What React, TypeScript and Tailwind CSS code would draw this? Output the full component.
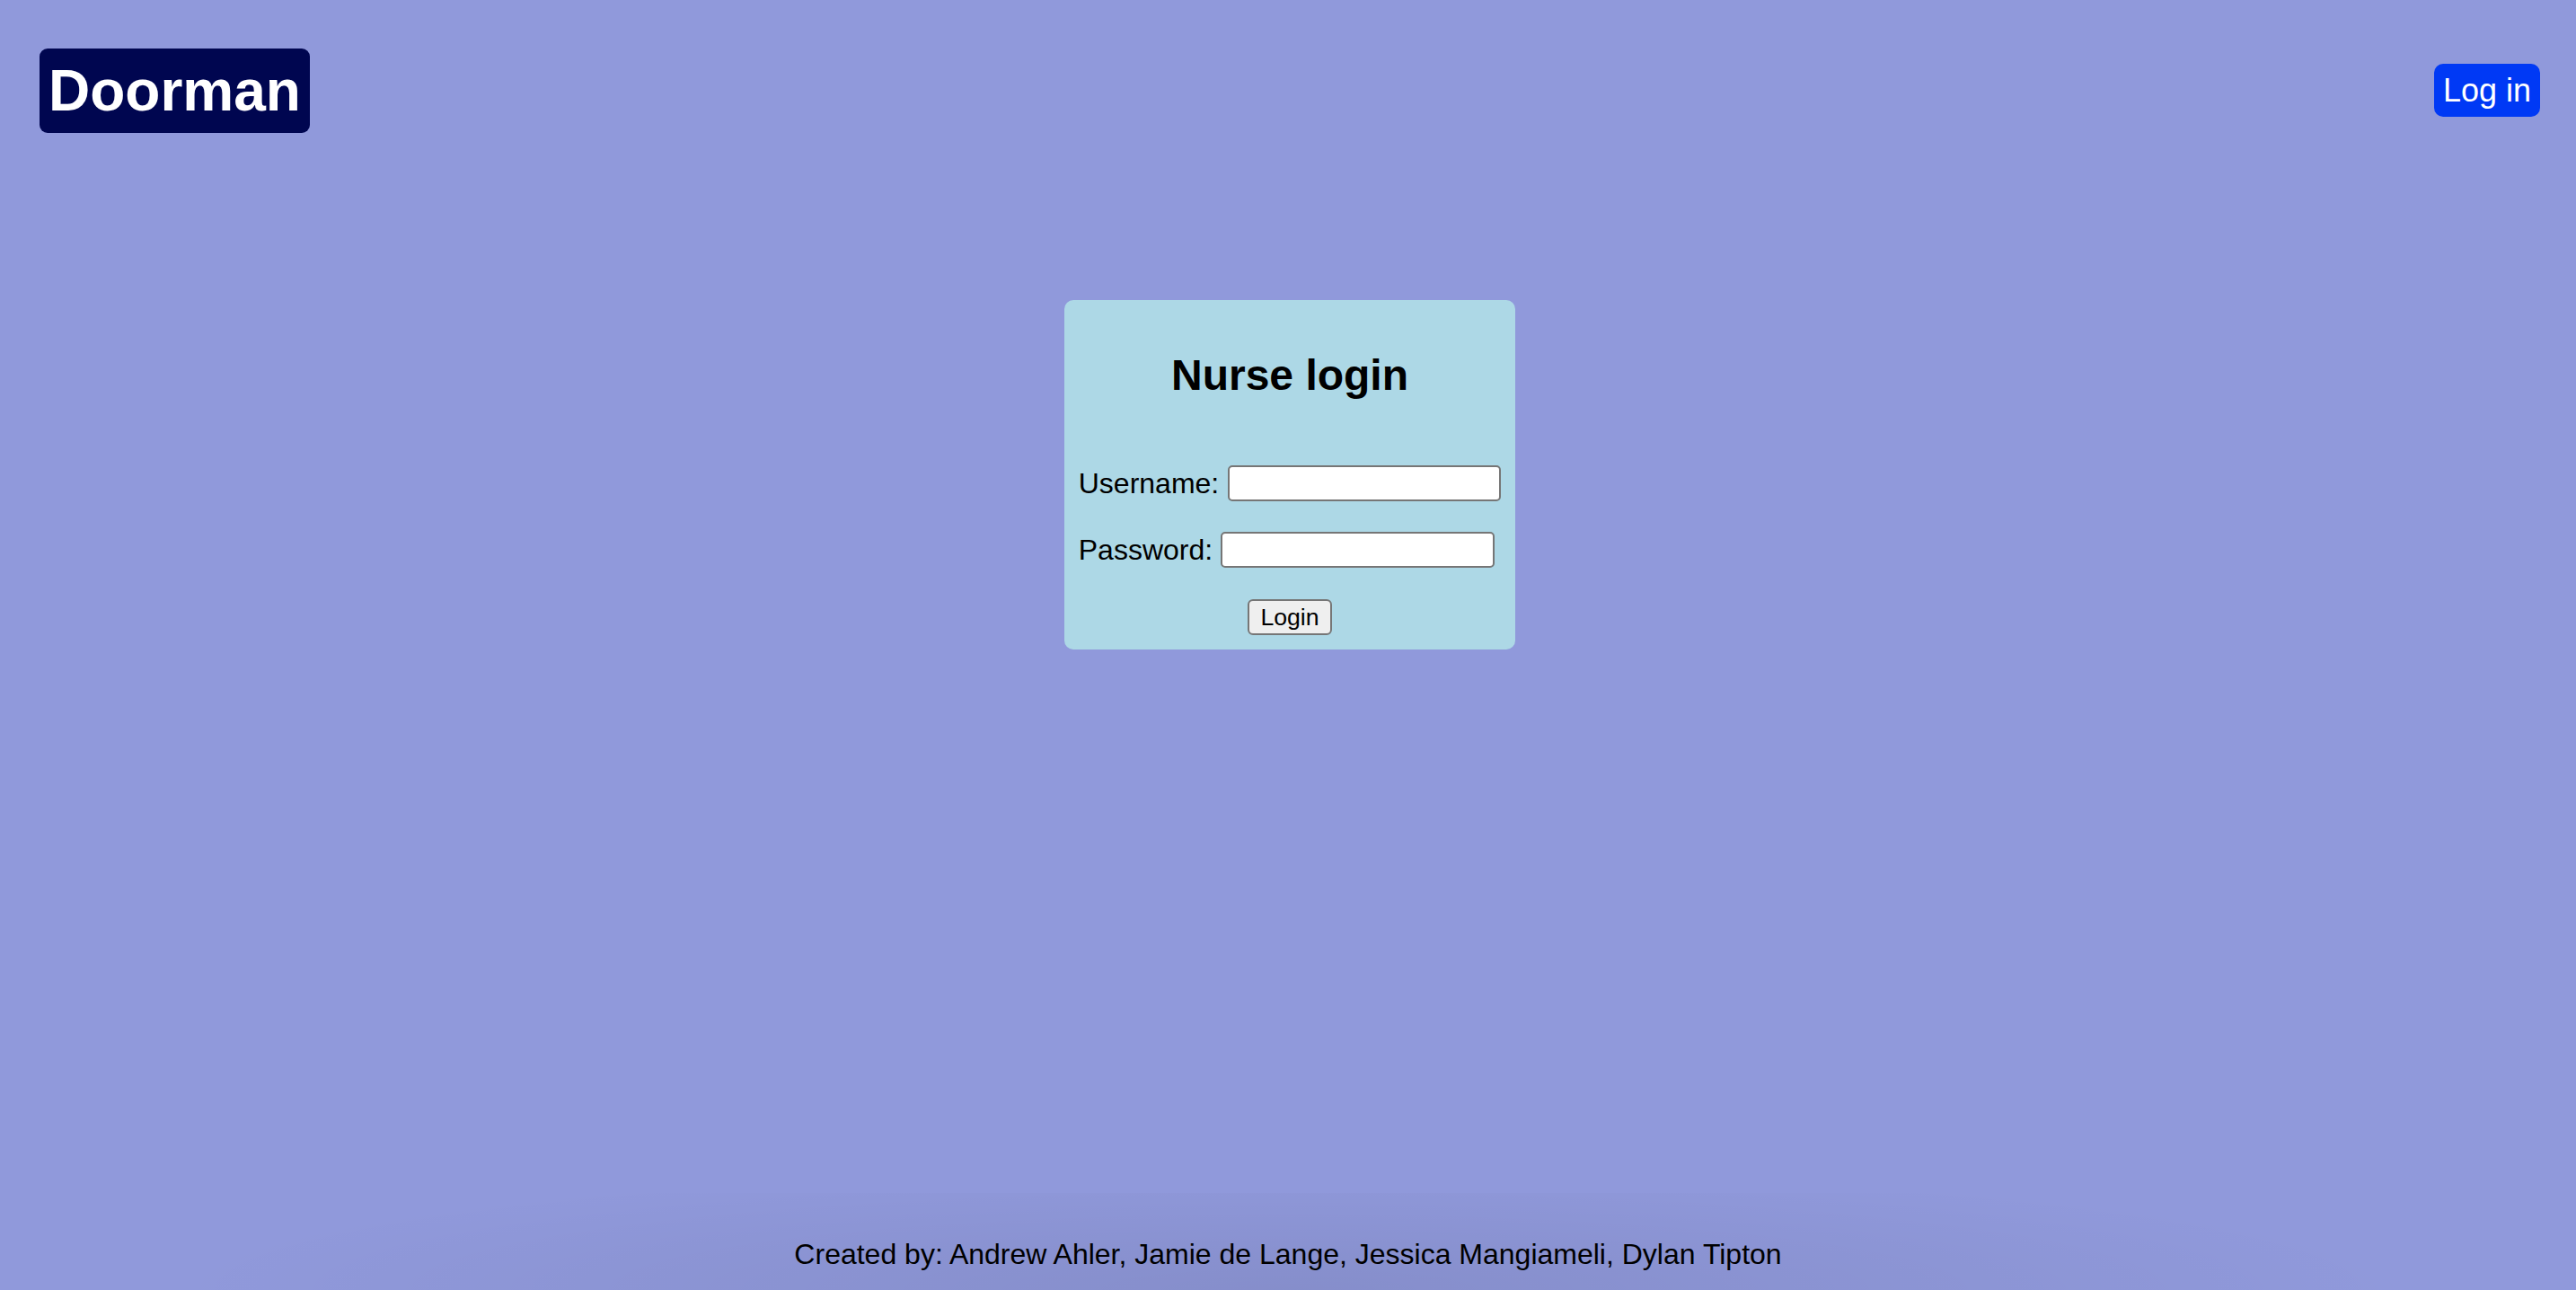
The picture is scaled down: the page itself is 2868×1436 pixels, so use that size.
export default function App() {
  return (
    <div className="flex h-screen flex-col bg-[#9099db] font-['Liberation_Sans',Arial,sans-serif] text-black">
      <header className="flex items-center justify-between pl-[44px] pr-[40px] pt-[54px]">
        <h1 className="rounded-[9px] bg-[#000650] p-[10px] text-[64px] font-bold leading-[74px] text-white">
          Doorman
        </h1>
        <button className="-mt-[2px] rounded-[10px] bg-[#0039f5] px-[10px] py-[9px] text-[36px] leading-[41px] text-white">
          Log in
        </button>
      </header>

      <main className="flex flex-1 flex-col items-center">
        <div className="mt-[186px] ml-[4px] rounded-[10px] bg-[#add8e6] p-[16px]">
          <h2 className="mt-[40px] text-center text-[48px] font-bold leading-[55px]">Nurse login</h2>

          <div className="mt-[73px] flex h-[40px] items-center gap-[10px]">
            <label className="text-[32px] leading-[37px]">Username:</label>
            <input
              type="text"
              className="h-[40px] w-[304px] rounded-[5px] border-2 border-[#767676] bg-white px-2 text-[26px]"
            />
          </div>

          <div className="mt-[34px] flex h-[40px] items-center gap-[9px]">
            <label className="text-[32px] leading-[37px]">Password:</label>
            <input
              type="password"
              className="h-[40px] w-[305px] rounded-[5px] border-2 border-[#767676] bg-white px-2 text-[26px]"
            />
          </div>

          <div className="mt-[35px] flex justify-center">
            <button className="h-[40px] w-[94px] rounded-[6px] border-2 border-[#767676] bg-[#efefef] text-[26.67px] leading-[30px]">
              Login
            </button>
          </div>
        </div>
      </main>

      <footer className="bg-[radial-gradient(ellipse_1250px_140px_at_50%_100%,rgba(0,0,0,0.075),transparent)] pb-[21px] pt-[50px] text-center text-[32px] leading-[37px]">
        Created by: Andrew Ahler, Jamie de Lange, Jessica Mangiameli, Dylan Tipton
      </footer>
    </div>
  );
}
